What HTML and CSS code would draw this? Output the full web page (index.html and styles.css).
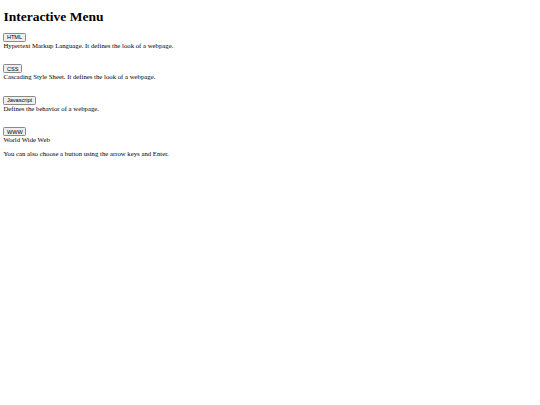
FILE: index.html
```html
<!DOCTYPE html>
<html lang="en">
    <head>
        <meta charset="UTF-8">
        <title>Interactive Menu</title>
        <link rel="stylesheet" href="styles.css">
    </head>
    <body>
        <h1>Interactive Menu</h1>

        <div id="menu">
            <div class="menu-item">
                <button>HTML</button>
                <div class="desc">Hypertext Markup Language. It defines the look of a webpage.</div>
            </div>
            <div class="menu-item">
                <button>CSS</button>
                <div class="desc">Cascading Style Sheet. It defines the look of a webpage.</div>
            </div>
            <div class="menu-item">
                <button>Javascript</button>
                <div class="desc">Defines the behavior of a webpage.</div>
            </div>
            <div class="menu-item">
                <button>WWW</button>
                <div class="desc">World Wide Web</div>
            </div>
        </div>

        <p class="hint">You can also choose a button using the arrow keys and Enter.</p>
    </body>
</html>
```

FILE: styles.css
```css
body {
    margin: 3.4px;
    font-family: "Liberation Serif", "Times New Roman", serif;
    font-size: 6.75px;
}

h1 {
    font-size: 13.5px;
    margin: 6px 0 7.5px;
}

/* Menu buttons, each with its description underneath */

.menu-item + .menu-item {
    margin-top: 15.2px;
}

.menu-item button {
    display: block;
    font-family: "Liberation Sans", Arial, sans-serif;
    font-size: 5.6px;
    padding: 0.6px 2.5px;
    border: 0.85px solid #8a8a8a;
    border-radius: 1.3px;
    background-color: #efefef;
    color: #000;
}

.hint {
    margin: 6.75px 0;
}
```
